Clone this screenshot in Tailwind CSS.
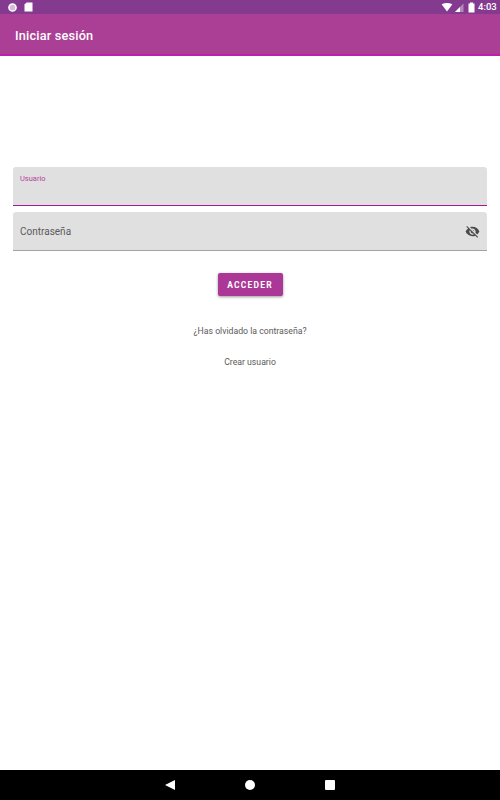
<!DOCTYPE html>
<html lang="es">

<head>
    <meta charset="UTF-8" />
    <meta name="viewport" content="width=device-width, initial-scale=1.0" />
    <title>Iniciar sesión</title>
    <script src="https://cdn.jsdelivr.net/npm/@tailwindcss/browser@4"></script>
</head>

<body class="bg-white font-['Roboto',sans-serif] text-[#5a5a5a]">
    <div class="flex flex-col h-[800px] w-[500px] overflow-hidden">

        <!-- Status bar -->
        <div class="h-[14px] bg-[#843a8f] flex items-center pl-[7px] pr-[2px] text-white shrink-0">
            <svg width="11" height="11" viewBox="0 0 11 11" class="mr-[6px]">
                <circle cx="5.5" cy="5.5" r="3.6" fill="#d9b8de" stroke="white" stroke-width="1.5" />
            </svg>
            <svg width="9" height="10" viewBox="0 0 9 10">
                <path d="M2.5 .5H8.5V9.5H.5V2.5Z" fill="white" />
            </svg>
            <div class="ml-auto flex items-center">
                <svg width="12" height="9" viewBox="0 0 13 10">
                    <path d="M.5 1.5Q6.5 -1.5 12.5 1.5L6.5 9.5Z" fill="white" />
                </svg>
                <svg width="9" height="9" viewBox="0 0 9 9" class="ml-[2px]">
                    <path d="M8.5 .5V9H0Z" fill="white" fill-opacity=".4" />
                    <path d="M5 4V9H0Z" fill="white" />
                </svg>
                <svg width="7" height="11" viewBox="0 0 7 11" class="ml-[4px]">
                    <path d="M2 .5H5V1.5H6.5V10.5H.5V1.5H2Z" fill="white" />
                </svg>
                <span class="ml-[3px] text-[9.5px] font-medium leading-[14px] w-[20px]">4:03</span>
            </div>
        </div>

        <!-- App bar -->
        <header class="h-[42px] pt-[3px] bg-[#ab3f96] border-b-2 border-[#c21bb0] flex items-center pl-[15px] shrink-0">
            <h1 class="text-white text-[12.7px] font-medium tracking-[0.2px]">Iniciar sesión</h1>
        </header>

        <!-- Login form -->
        <main class="flex-1 flex flex-col items-center px-[13px] pt-[111px]">
            <div class="w-full h-[39px] bg-[#e0e0e0] rounded-t-[3px] border-b-[1.5px] border-[#a0198f] px-[7px] pt-[7px]">
                <label class="block text-[7.5px] leading-[10px] text-[#b8409f]">Usuario</label>
            </div>

            <div class="w-full h-[39px] mt-[6px] bg-[#e0e0e0] rounded-t-[3px] border-b border-[#a3a3a3] pl-[7px] pr-[7px] flex items-center justify-between">
                <span class="text-[10px]">Contraseña</span>
                <svg width="15" height="15" viewBox="0 0 24 24" fill="#4a4a4a">
                    <path d="M12 7c2.76 0 5 2.24 5 5 0 .65-.13 1.26-.36 1.83l2.92 2.92c1.51-1.26 2.7-2.89 3.43-4.75-1.73-4.39-6-7.5-11-7.5-1.4 0-2.74.25-3.98.7l2.16 2.16C10.74 7.13 11.35 7 12 7zM2 4.27l2.28 2.28.46.46C3.08 8.3 1.78 10.02 1 12c1.73 4.39 6 7.5 11 7.5 1.55 0 3.03-.3 4.38-.84l.42.42L19.73 22 21 20.73 3.27 3 2 4.27zM7.53 9.8l1.55 1.55c-.05.21-.08.43-.08.65 0 1.66 1.34 3 3 3 .22 0 .44-.03.65-.08l1.55 1.55c-.67.33-1.41.53-2.2.53-2.76 0-5-2.24-5-5 0-.79.2-1.53.53-2.2zm4.31-.78l3.15 3.15.02-.16c0-1.66-1.34-3-3-3l-.17.01z" />
                </svg>
            </div>

            <button type="button" class="mt-[22px] w-[65px] h-[23px] pt-[1px] bg-[#ab3797] rounded-[2px] shadow-[0_1px_3px_rgba(0,0,0,0.4)] text-white text-[8.5px] font-bold tracking-[1.2px]">ACCEDER</button>

            <a class="mt-[29px] text-[8.7px] leading-[12px]">¿Has olvidado la contraseña?</a>
            <a class="mt-[19px] text-[8.7px] leading-[12px]">Crear usuario</a>
        </main>

        <!-- Navigation bar -->
        <nav class="h-[30px] bg-black flex items-center justify-center gap-[70px] shrink-0">
            <svg width="10" height="10" viewBox="0 0 10 10">
                <path d="M0 5L10 0V10Z" fill="white" />
            </svg>
            <div class="w-[10px] h-[10px] rounded-full bg-white"></div>
            <div class="w-[10px] h-[10px] rounded-[1px] bg-white"></div>
        </nav>
    </div>
</body>

</html>
